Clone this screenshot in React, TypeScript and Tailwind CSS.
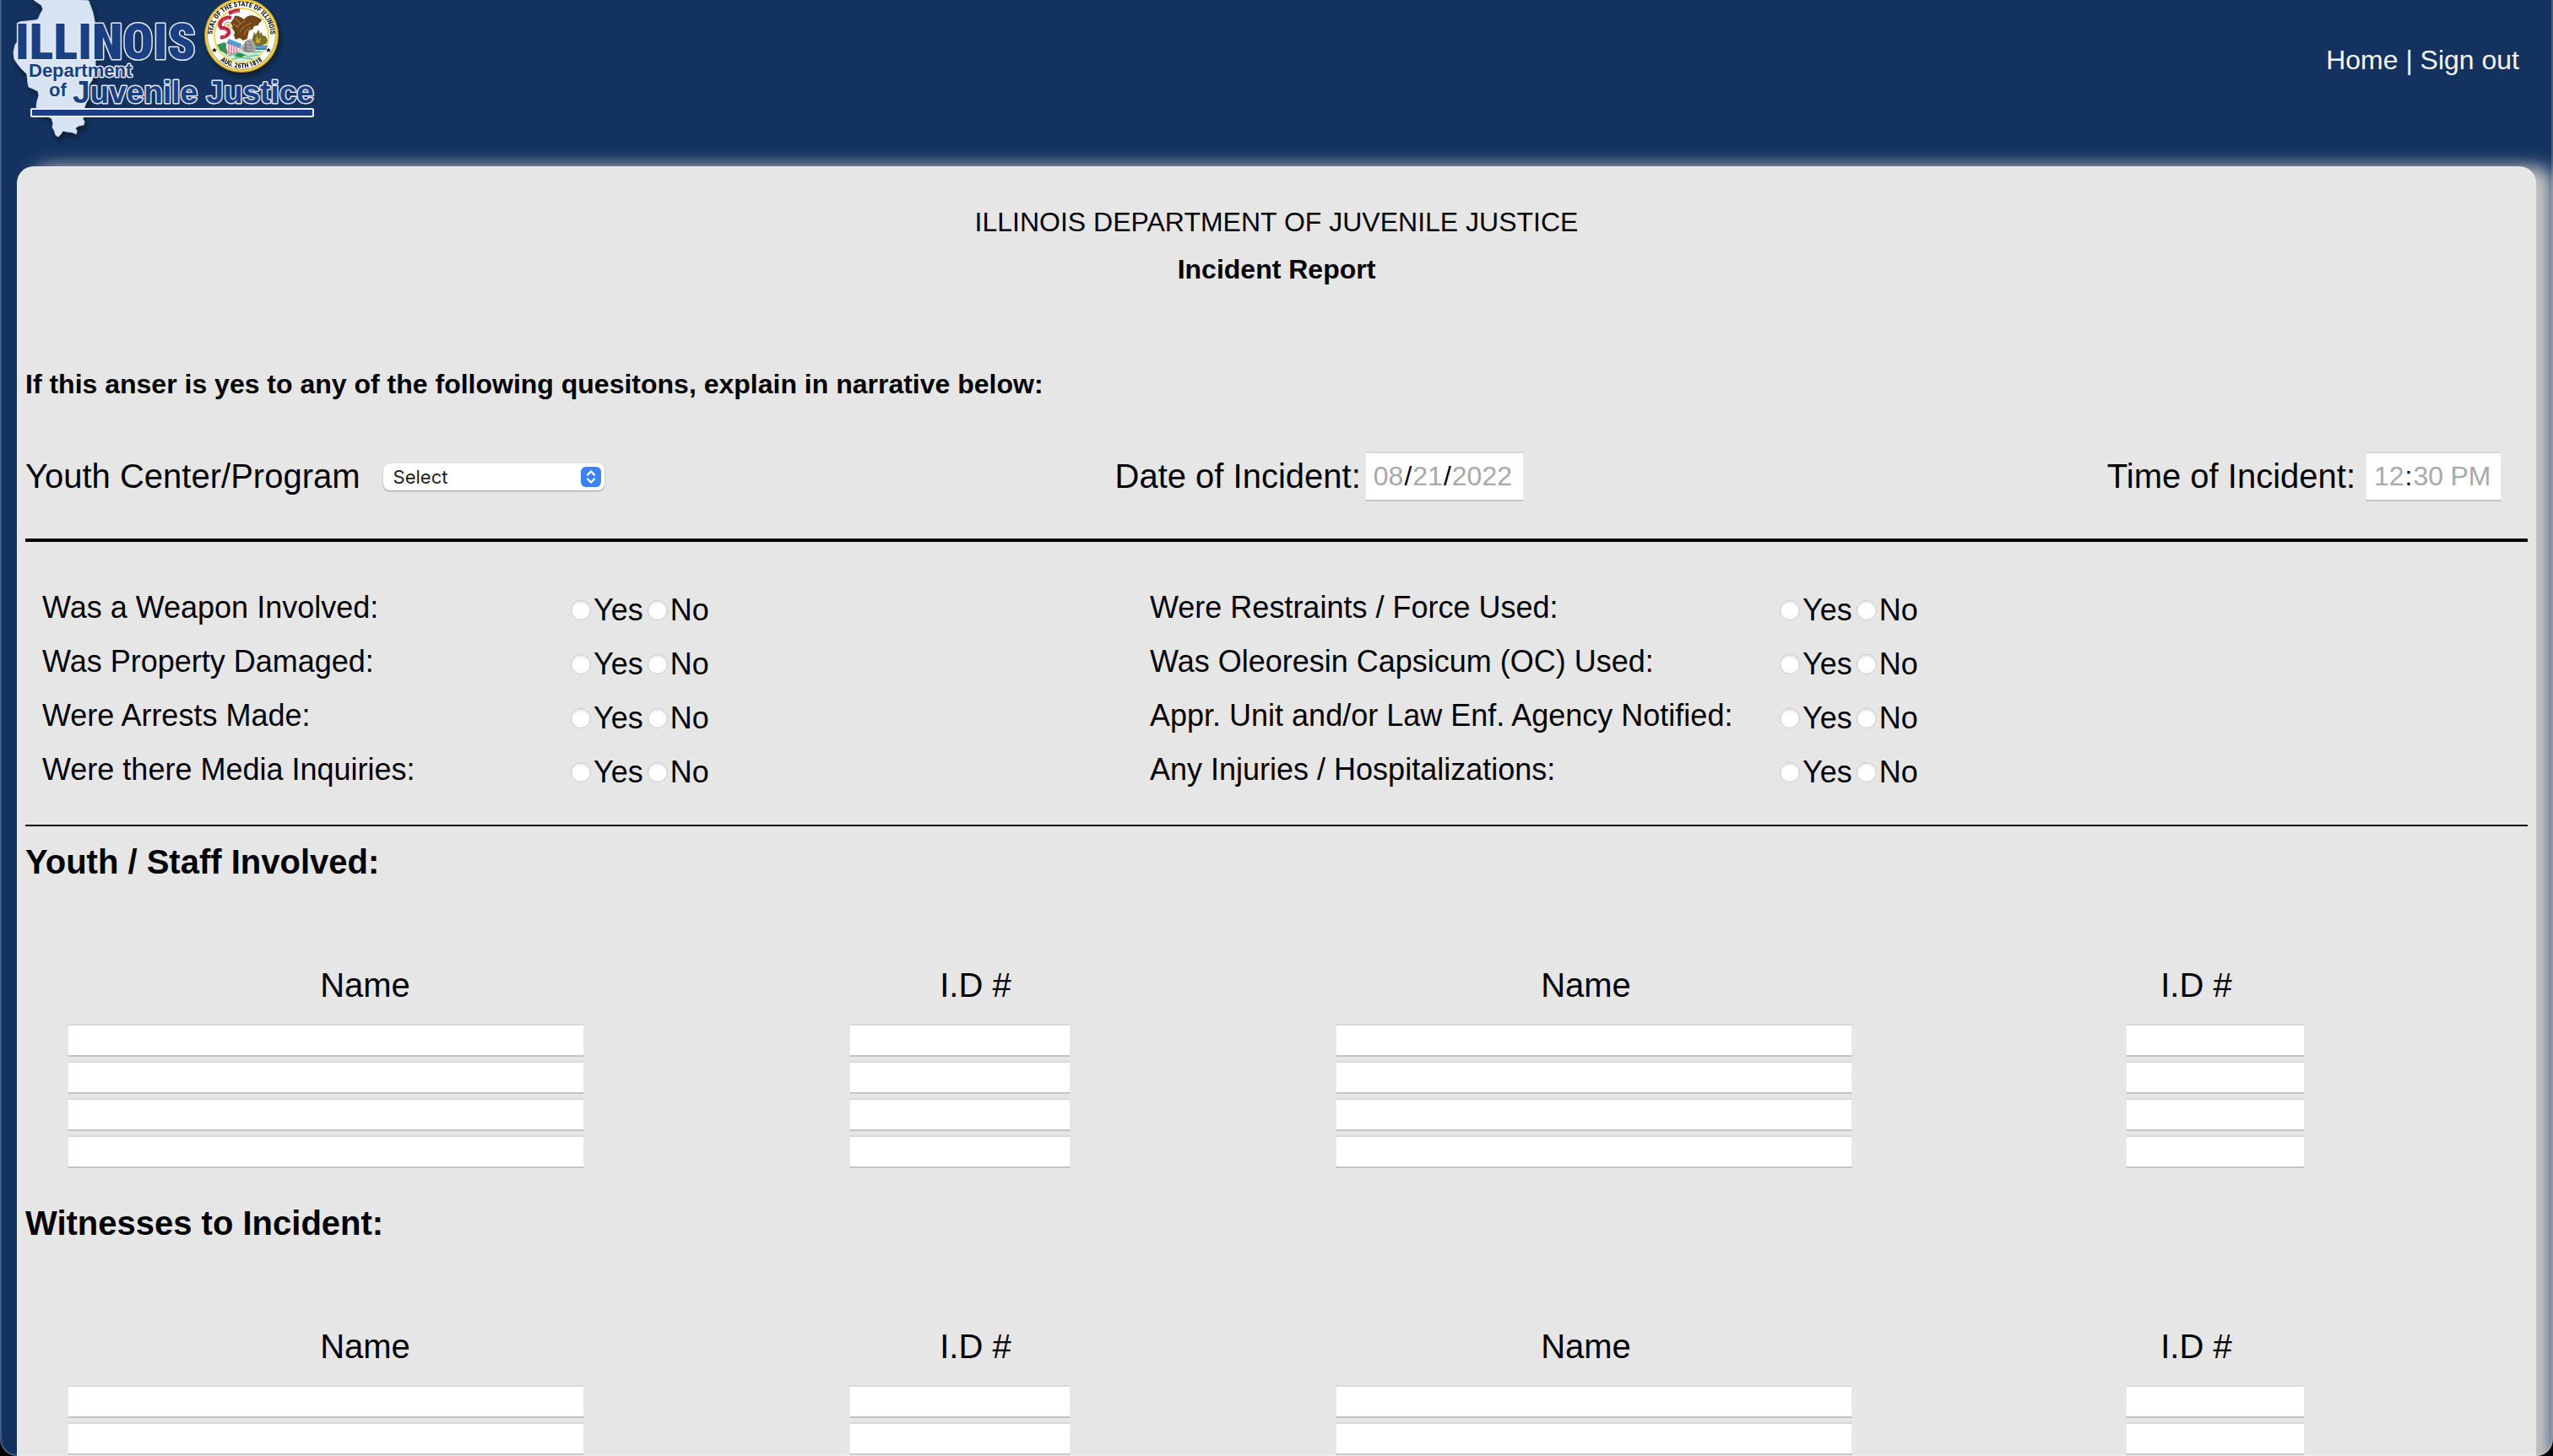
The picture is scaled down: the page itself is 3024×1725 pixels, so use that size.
import React from "react";

const ROWS = [0, 1, 2, 3];

const QUESTIONS: [string, string][] = [
  ["Was a Weapon Involved:", "Were Restraints / Force Used:"],
  ["Was Property Damaged:", "Was Oleoresin Capsicum (OC) Used:"],
  ["Were Arrests Made:", "Appr. Unit and/or Law Enf. Agency Notified:"],
  ["Were there Media Inquiries:", "Any Injuries / Hospitalizations:"],
];

const PEOPLE_COLUMNS = [
  { label: "Name", cell: "pl-[9px]", field: "w-[612px]" },
  { label: "I.D #", cell: "pl-[212px]", field: "w-[262px]" },
  { label: "Name", cell: "pl-[65px]", field: "w-[612px]" },
  { label: "I.D #", cell: "pl-[278px]", field: "w-[212px]" },
];

function StateSeal() {
  return (
    <g>
      <circle cx="286" cy="42" r="44" fill="#b8952a" />
      <circle cx="286" cy="42" r="43" fill="#f0d050" />
      <circle cx="286" cy="42" r="40.5" fill="#8a8468" />
      <circle cx="286" cy="42" r="40" fill="#fdfdfb" />
      <circle cx="286" cy="42" r="32" fill="#fff" stroke="#f2d552" strokeWidth="2" />
      <path id="seal-top" d="M 252.600 50 A 34.400 34.400 0 1 1 319.400 50" fill="none" />
      <path id="seal-bottom" d="M 256 66.500 A 38.800 38.800 0 0 0 316 66.500" fill="none" />
      <g fontFamily="Roboto Condensed, Liberation Sans, sans-serif" fontWeight="800" fill="#151515">
        <text fontSize="8">
          <textPath href="#seal-top" startOffset="50%" textAnchor="middle">SEAL OF THE STATE OF ILLINOIS</textPath>
        </text>
        <text fontSize="8">
          <textPath href="#seal-bottom" startOffset="50%" textAnchor="middle">AUG. 26TH 1818</textPath>
        </text>
      </g>
      <path d="M254 56.500l1 2h2l-1.600 1.400.6 2.100-2-1.200-2 1.200.6-2.100-1.600-1.400h2zM318 56.500l1 2h2l-1.600 1.400.6 2.100-2-1.200-2 1.200.6-2.100-1.600-1.400h2z" fill="#151515" />
      {/* ground and water */}
      <path d="M259 56q27-6 54 1c-4 9-14 16-27 16s-22-7-27-17z" fill="#cfeedd" />
      <path d="M270 66l14-3 10 4 12-2M275 70l10-2 14 2M300 62l9-1" stroke="#6fbf93" strokeWidth="1.500" fill="none" />
      <path d="M296 54h21l-2 5h-17z" fill="#3d7f9c" />
      <path d="M298 56h17" stroke="#bfe0ea" strokeWidth=".8" />
      <path d="M257 53l9-3 4 6-1 9-4-3-4-2zM277 67l5-5 9 3-5 3z" fill="#2f9156" />
      {/* trees */}
      <path d="M297 51l2-5 2-8 2 3 3-6 2 5 2-2 1 4 4 1 2 5-2 4-5 2h-10z" fill="#77702a" />
      <path d="M304 42l2 5 3-3-1 7h-5z" fill="#c9a832" />
      {/* boulder */}
      <path d="M286 60l1-6 5-6 5-2 4 4 2 5-1 6-8 2z" fill="#a9a9a9" />
      <path d="M288 57h12M290 53l9 1M289 60l11 1M293 48l5 4M291 49v12" stroke="#555" strokeWidth=".8" fill="none" />
      {/* eagle */}
      <path d="M278 19c5-1 8 2 11 4 3-4 8-6 13-4l8 4-1 3-2 1-1 3-5 1-2 4-4 1-1 4-1 6-5 2-4-3-5 2-2-5 1-4-4-6-1-5 4-5z" fill="#714416" />
      <path d="M281 33c2-5 6-7 10-8M284 38c3-6 8-8 14-11M289 42c1-5 4-8 8-10M279 22l7 7M276 28l6 4" stroke="#a9713a" strokeWidth="1.200" fill="none" />
      <path d="M266 30c0-4 5-5 8-2l2 4-5 3-4-1z" fill="#e8e2c8" stroke="#8d7a35" strokeWidth=".6" />
      <circle cx="270.500" cy="30" r="1.300" fill="#d6a21b" />
      {/* banner */}
      <path d="M284 12.500c-6-.5-8 2-13 3M274 21c-6-1-9 1-12 4-2 3-2 6 0 8 5 0 9 2 9 5s-5 7-10 6" stroke="#c22748" strokeWidth="4.500" fill="none" />
      <path d="M283 13l-8 2M271 22l-7 2M265 35l4 3-4 6" stroke="#f3b6c2" strokeWidth=".9" fill="none" strokeDasharray="1.500 1.200" />
      {/* shield */}
      <path d="M271 46l15 6-1 6-17-5z" fill="#4b9fd4" />
      <path d="M268 51l17 6c-2 4-7 7-13 7-4-3-5-8-4-13z" fill="#fff" stroke="#e0476f" strokeWidth=".8" />
      <path d="M271 53l0 10M274 54l0 10M277 55l0 8M280 56l0 6" stroke="#e0476f" strokeWidth="1.200" />
    </g>
  );
}

function Logo() {
  return (
    <svg width="390" height="180" viewBox="0 0 390 180" role="img" aria-label="Illinois Department of Juvenile Justice" className="block">
      <defs>
        <filter id="logo-shadow" x="-10%" y="-10%" width="120%" height="125%">
          <feDropShadow dx="2" dy="4" stdDeviation="2.500" floodColor="#0a1424" floodOpacity=".85" />
        </filter>
      </defs>
      <g filter="url(#logo-shadow)">
        <path
          d="M39 -6l1 6 9 6 2 5-3 5-3 7-4 1-18 2-1 22-4 5-2 9 1 8 4 6 5 6 6 6 1 10 1 5 5 2 6 3 1 5-2 7-1 6 2 7 16 7 2 6-1 5 2 3 2 6 3 2 3-3 2-4 6 1 7 1 3 2 1-4-2-3 4-3 6-1 1-4-2-3 2-14 4-11-1-12 6-9 4-14-1-56-2-10-5-14z"
          fill="#d8e3f4"
          stroke="#c4d3ea"
        />
        <StateSeal />
      </g>
      <rect x="37" y="129" width="334" height="9" rx="1" fill="#1a4083" stroke="#eceef2" strokeWidth="2" />
      <g
        fill="#1a4083"
        stroke="#e4e9f1"
        strokeWidth="3"
        strokeLinejoin="round"
        paintOrder="stroke"
        fontWeight="700"
        fontFamily="Liberation Sans, Arial, sans-serif"
      >
        <text x="18" y="70" fontSize="60" fontWeight="900" fontFamily="Roboto Condensed, Liberation Sans, sans-serif">ILLINOIS</text>
        <text x="34" y="91" fontSize="22">Department</text>
        <text x="58" y="114" fontSize="22">of</text>
        <text x="86" y="122" fontSize="37">Juvenile Justice</text>
      </g>
    </svg>
  );
}

function YesNo({ name, labelledBy }: { name: string; labelledBy: string }) {
  return (
    <div role="radiogroup" aria-labelledby={labelledBy} className="flex items-center gap-[5px] pt-1">
      {["Yes", "No"].map((option) => (
        <label key={option} className="flex items-center gap-[3px]">
          <input
            type="radio"
            name={name}
            value={option}
            className="size-6 appearance-none rounded-full border border-[#c9c9c9] bg-white shadow-[inset_0_2px_3px_rgba(0,0,0,0.1)] checked:border-[7px] checked:border-blue-500"
          />
          {option}
        </label>
      ))}
    </div>
  );
}

function PeopleTable({ title, id }: { title: string; id: string }) {
  return (
    <section className="mb-[30px]">
      <h2 id={id} className="text-[40px] leading-[60px] font-bold">{title}</h2>
      <div className="mt-[86px] pr-[31px] pl-[41px]">
        <table aria-labelledby={id} className="w-full table-fixed border-collapse">
          <thead>
            <tr>
              {PEOPLE_COLUMNS.map((column, i) => (
                <th key={i} scope="col" className="p-0 pb-4 text-center text-[40px] leading-[60px] font-normal">
                  {column.label}
                </th>
              ))}
            </tr>
          </thead>
          <tbody>
            {ROWS.map((row) => (
              <tr key={row}>
                {PEOPLE_COLUMNS.map((column, i) => (
                  <td key={i} className={`p-0 pb-[5px] ${column.cell}`}>
                    <input
                      type="text"
                      aria-label={`${column.label} ${row + 1}`}
                      className={`block h-[39px] border border-y-2 border-x-[#e9e9e9] border-t-[#d9d9d9] border-b-[#c3c3c3] bg-white px-2 text-2xl ${column.field}`}
                    />
                  </td>
                ))}
              </tr>
            ))}
          </tbody>
        </table>
      </div>
    </section>
  );
}

export default function App() {
  return (
    <div className="relative h-screen bg-black font-['Liberation_Sans',Arial,sans-serif] text-black">
      <div className="h-full overflow-x-hidden overflow-y-auto rounded-b-[20px] bg-[#13325f] [scrollbar-width:none]">
        <header className="flex h-[197px] items-start justify-between pr-10">
          <Logo />
          <nav className="pt-[51px] text-[32px] leading-10 text-[#f5f5f5]">
            <a href="#home">Home</a> | <a href="#sign-out">Sign out</a>
          </nav>
        </header>

        <main className="mx-5 rounded-t-[20px] bg-[#e6e6e6] px-2.5 pt-[38px] shadow-[20px_0_20px_#c4c4c4]">
          <div className="text-center text-[32px] leading-[56px]">
            <p>ILLINOIS DEPARTMENT OF JUVENILE JUSTICE</p>
            <h1 className="font-bold">Incident Report</h1>
          </div>
          <p className="mt-20 text-[32px] leading-[56px] font-bold">
            If this anser is yes to any of the following quesitons, explain in narrative below:
          </p>

          <div className="mt-[52px] flex items-center pr-[31px] text-[40px] leading-[59px]">
            <div className="flex w-[44%] items-center gap-[27px]">
              <label htmlFor="center">Youth Center/Program</label>
              <div className="relative">
                <select
                  id="center"
                  className="block h-8 w-[262px] appearance-none rounded-lg bg-white pl-3 font-['Inter',sans-serif] text-[22px] leading-8 text-[#222] shadow-[0_1px_2px_rgba(0,0,0,0.35)]"
                >
                  <option>Select</option>
                </select>
                <svg viewBox="0 0 24 24" className="pointer-events-none absolute top-1 right-1 size-6" aria-hidden="true">
                  <rect width="24" height="24" rx="6" fill="#3b82f7" />
                  <path d="M8 9.500l4-4 4 4M8 14.500l4 4 4-4" fill="none" stroke="#fff" strokeWidth="2.400" strokeLinecap="round" strokeLinejoin="round" />
                </svg>
              </div>
            </div>
            <div className="flex items-center gap-[5px]">
              <label htmlFor="date">Date of Incident:</label>
              <input
                id="date"
                type="date"
                defaultValue="2022-08-21"
                className="h-[59px] w-[188px] border border-y-2 border-x-[#e9e9e9] border-t-[#d9d9d9] border-b-[#c3c3c3] bg-white px-2 text-[32px] [&::-webkit-calendar-picker-indicator]:hidden [&::-webkit-datetime-edit-day-field]:text-[#a9a9a9] [&::-webkit-datetime-edit-month-field]:text-[#a9a9a9] [&::-webkit-datetime-edit-year-field]:text-[#a9a9a9]"
              />
            </div>
            <div className="ml-auto flex items-center gap-3">
              <label htmlFor="time">Time of Incident:</label>
              <input
                id="time"
                type="time"
                defaultValue="12:30"
                className="h-[59px] w-[161px] border border-y-2 border-x-[#e9e9e9] border-t-[#d9d9d9] border-b-[#c3c3c3] bg-white px-2 text-[32px] [&::-webkit-calendar-picker-indicator]:hidden [&::-webkit-datetime-edit-ampm-field]:text-[#a9a9a9] [&::-webkit-datetime-edit-hour-field]:text-[#a9a9a9] [&::-webkit-datetime-edit-minute-field]:text-[#a9a9a9]"
              />
            </div>
          </div>

          <hr className="mt-[44px] border-t-4 border-black" />

          <div className="mt-[47px] mb-8 grid grid-cols-[626fr_686fr_746fr_886fr] pl-5 text-[36px] leading-[60px]">
            {QUESTIONS.flatMap((pair, row) =>
              pair.map((question, side) => {
                const id = `q${row}-${side}`;
                return (
                  <React.Fragment key={id}>
                    <span id={id} className="pt-px pb-[3px]">{question}</span>
                    <YesNo name={`answer-${id}`} labelledBy={id} />
                  </React.Fragment>
                );
              })
            )}
          </div>

          <hr className="mb-3 border-t-2 border-black" />

          <PeopleTable id="people" title="Youth / Staff Involved:" />
          <PeopleTable id="witnesses" title="Witnesses to Incident:" />
        </main>
      </div>
      <div className="pointer-events-none absolute inset-0 rounded-b-[20px] border-2 border-t-0 border-white/20" />
    </div>
  );
}
